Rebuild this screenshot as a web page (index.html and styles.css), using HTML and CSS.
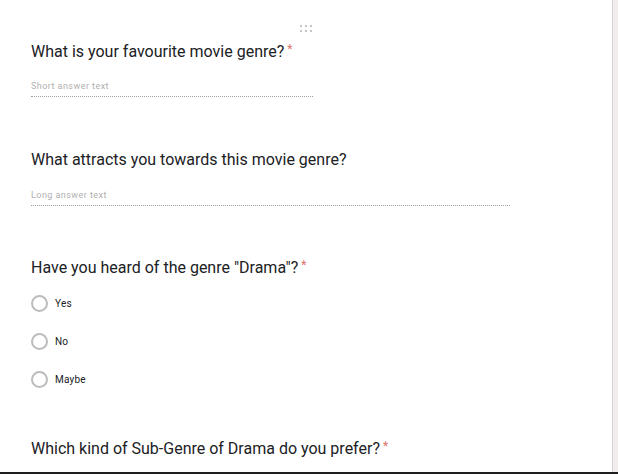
FILE: index.html
```html
<!DOCTYPE html>
<html>
<head>
<meta charset="utf-8">
<link rel="stylesheet" href="styles.css">
</head>
<body>
<div class="page">
  <div class="card">
    <div class="handle">
      <span></span><span></span><span></span><span></span><span></span><span></span>
    </div>
    <div class="q q1">
      <div class="title">What is your favourite movie genre?<span class="req">*</span></div>
      <div class="answer short">Short answer text</div>
    </div>
    <div class="q q2">
      <div class="title">What attracts you towards this movie genre?</div>
      <div class="answer long">Long answer text</div>
    </div>
    <div class="q q3">
      <div class="title">Have you heard of the genre "Drama"?<span class="req">*</span></div>
      <div class="options">
        <div class="opt"><span class="radio"></span><span class="lbl">Yes</span></div>
        <div class="opt"><span class="radio"></span><span class="lbl">No</span></div>
        <div class="opt"><span class="radio"></span><span class="lbl">Maybe</span></div>
      </div>
    </div>
    <div class="q q4">
      <div class="title">Which kind of Sub-Genre of Drama do you prefer?<span class="req">*</span></div>
    </div>
  </div>
  <div class="bottom"></div>
</div>
</body>
</html>
```
FILE: styles.css
```css
html, body {
  margin: 0;
  padding: 0;
}
body {
  background: #f2eded;
  font-family: Roboto, "Liberation Sans", sans-serif;
  color: #202124;
}
.page {
  width: 618px;
  height: 474px;
  display: flex;
  flex-direction: column;
  overflow: hidden;
}
.card {
  width: 613px;
  flex: 1;
  background: #fff;
  border-right: 1px solid #d9d3d4;
  box-sizing: border-box;
  padding-left: 31px;
  display: flex;
  flex-direction: column;
  overflow: hidden;
}
.bottom {
  height: 2px;
  background: #1e1e1e;
}
.handle {
  margin-top: 25px;
  margin-left: 269px;
  width: 13px;
  display: grid;
  grid-template-columns: repeat(3, 2px);
  column-gap: 3px;
  row-gap: 3px;
}
.handle span {
  width: 2px;
  height: 2px;
  background: #c4c4c4;
}
.title {
  font-size: 16px;
  line-height: 20px;
  color: #202124;
}
.req {
  color: #e0706a;
  margin-left: 3px;
  font-size: 12px;
  vertical-align: top;
  line-height: 15px;
}
.q1 { margin-top: 10px; }
.answer {
  font-size: 9px;
  line-height: 12px;
  color: #b0b0b0;
  letter-spacing: 0.45px;
  padding-bottom: 4px;
  border-bottom: 1px dotted #9e9e9e;
}
.short { width: 282px; margin-top: 18px; }
.long { width: 479px; margin-top: 19px; }
.q2 { margin-top: 53px; }
.q3 { margin-top: 52px; }
.options {
  margin-top: 17px;
  display: flex;
  flex-direction: column;
  gap: 21px;
}
.opt {
  display: flex;
  align-items: center;
  height: 17px;
}
.radio {
  width: 13px;
  height: 13px;
  border: 2px solid #bdbdbd;
  border-radius: 50%;
  flex: none;
}
.lbl {
  margin-left: 7px;
  font-size: 10px;
  letter-spacing: 0.2px;
  color: #202124;
}
.q4 { margin-top: 51px; }
```
